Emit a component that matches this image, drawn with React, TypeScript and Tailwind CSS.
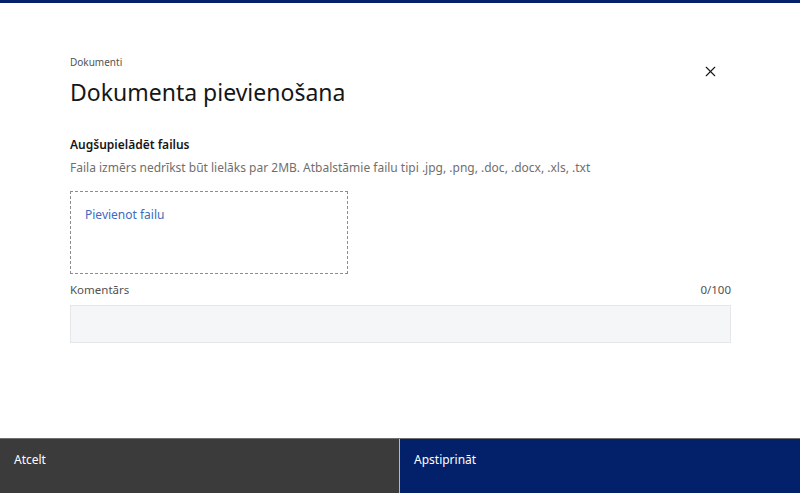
import { X } from 'lucide-react';

export default function App() {
  return (
    <main
      className="flex h-[493px] w-[800px] flex-col overflow-hidden bg-white text-[#161616]"
      style={{ fontFamily: '"Noto Sans", "Open Sans", sans-serif' }}
    >
      <div className="h-[3px] w-full bg-[#06206b]" />

      <section className="flex flex-1 flex-col pl-[70px] pr-[69px] pt-[51px]">
        <header className="flex items-start justify-between">
          <div>
            <p className="text-[10px] leading-4 text-[#525252]">Dokumenti</p>
            <h1 className="mt-[6px] text-[23px] leading-8 text-[#161616]">Dokumenta pievienošana</h1>
          </div>
          <button className="mr-[12px] mt-[9px] text-[#161616]">
            <X className="h-[17px] w-[17px]" strokeWidth={1.6} />
          </button>
        </header>

        <p className="mt-[27px] text-[12px] font-semibold leading-5 text-[#161616]">Augšupielādēt failus</p>
        <p className="mt-[3px] text-[12px] leading-5 text-[#6f6f6f]">
          Faila izmērs nedrīkst būt lielāks par 2MB. Atbalstāmie failu tipi .jpg, .png, .doc, .docx, .xls, .txt
        </p>

        <div className="mt-[13px] h-[83px] w-[278px] border border-dashed border-[#8d8d8d] px-[14px] pt-[9px]">
          <span className="text-[12px] leading-4 text-[#3d6ac2]">Pievienot failu</span>
        </div>

        <div className="mt-[6px] flex items-center justify-between text-[11.5px] leading-5 text-[#525252]">
          <span>Komentārs</span>
          <span>0/100</span>
        </div>
        <div className="mt-[5px] h-[38px] w-full border border-[#e4e6ea] bg-[#f5f6f8]" />
      </section>

      <footer className="flex h-[55px] border-t border-[#6f6f6f]">
        <button className="flex w-[399px] items-start self-stretch bg-[#3b3b3b] px-[14px] pt-[13px] text-left text-[12px] leading-4 text-white">
          Atcelt
        </button>
        <div className="w-px bg-[#b9b9b9]" />
        <button className="flex flex-1 items-start self-stretch bg-[#03216b] px-[14px] pt-[13px] text-left text-[12px] leading-4 text-white">
          Apstiprināt
        </button>
      </footer>
    </main>
  );
}
